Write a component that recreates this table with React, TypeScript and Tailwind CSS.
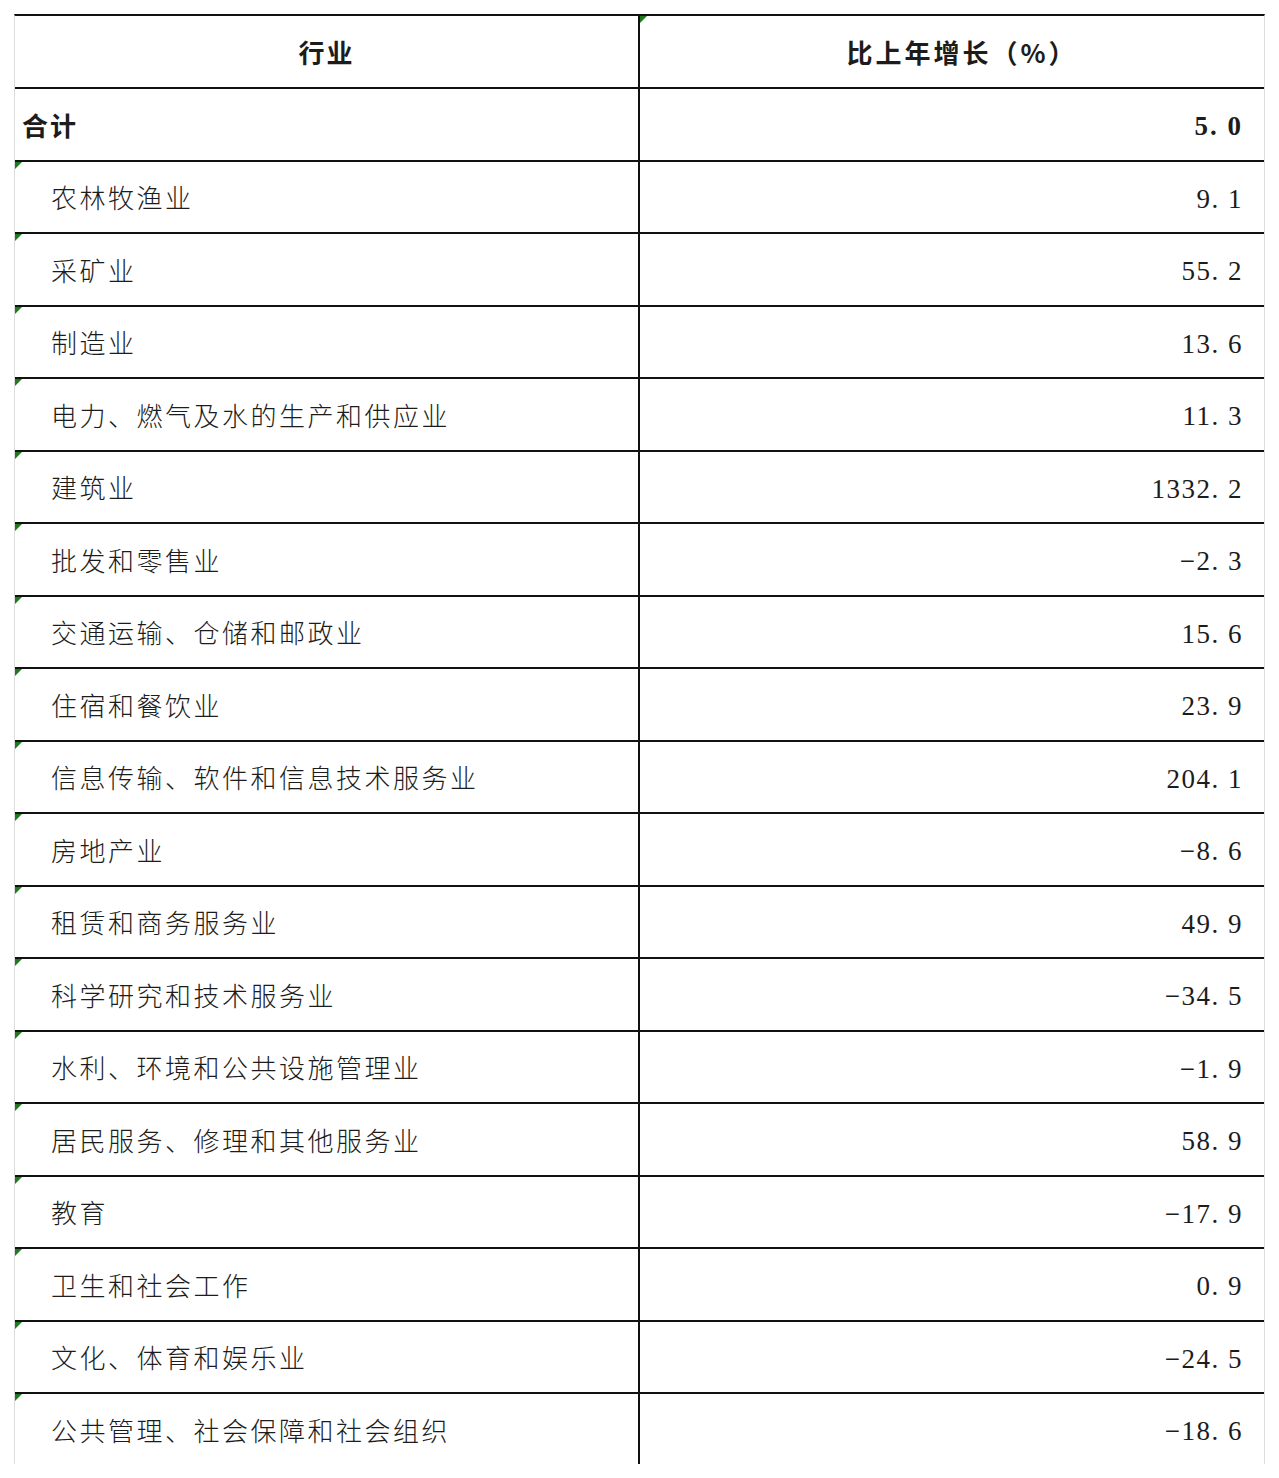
import React from 'react';

const rows: [string, string][] = [
  ['农林牧渔业', '9.1'],
  ['采矿业', '55.2'],
  ['制造业', '13.6'],
  ['电力、燃气及水的生产和供应业', '11.3'],
  ['建筑业', '1332.2'],
  ['批发和零售业', '−2.3'],
  ['交通运输、仓储和邮政业', '15.6'],
  ['住宿和餐饮业', '23.9'],
  ['信息传输、软件和信息技术服务业', '204.1'],
  ['房地产业', '−8.6'],
  ['租赁和商务服务业', '49.9'],
  ['科学研究和技术服务业', '−34.5'],
  ['水利、环境和公共设施管理业', '−1.9'],
  ['居民服务、修理和其他服务业', '58.9'],
  ['教育', '−17.9'],
  ['卫生和社会工作', '0.9'],
  ['文化、体育和娱乐业', '−24.5'],
  ['公共管理、社会保障和社会组织', '−18.6'],
];

const cjk = "font-['Noto_Sans_CJK_SC',sans-serif]";
const num = "font-['Liberation_Serif','Noto_Sans_CJK_SC',serif]";

// small green marker in the top-left corner of a cell
const Flag = () => (
  <span className="absolute left-0 top-0 h-0 w-0 border-t-[7px] border-r-[7px] border-t-[#1f7a1f] border-r-transparent" />
);

const App = () => {
  return (
    <div className="min-h-[1478px] bg-white pt-[14px] text-[#1c1c1c]">
      <div className="ml-[14px] w-[1251px] border-x border-t-2 border-x-[#dcdcdc] border-t-[#111]">
        {/* Header */}
        <div className="flex h-[73px] border-b-2 border-[#111]">
          <div className={`flex w-[623px] items-center justify-center ${cjk} text-[26px] font-bold tracking-[2px]`}>
            行业
          </div>
          <div className={`relative flex flex-1 items-center justify-center border-l-2 border-[#111] pl-[20px] ${cjk} text-[26px] font-bold tracking-[3px]`}>
            <Flag />
            比上年增长（%）
          </div>
        </div>

        {/* Total */}
        <div className="flex h-[72.5px] border-b-2 border-[#111]">
          <div className={`flex w-[623px] items-center pl-[7px] ${cjk} text-[26px] font-bold tracking-[2px]`}>
            合计
          </div>
          <div className={`flex flex-1 items-center justify-end border-l-2 border-[#111] pr-[21px] pt-[4px] ${num} text-[27px] font-bold tracking-[2px]`}>
            5. 0
          </div>
        </div>

        {rows.map(([name, value], i) => {
          const last = i === rows.length - 1;
          return (
            <div
              key={name}
              className={`flex ${last ? 'h-[70px]' : 'h-[72.5px] border-b-2 border-[#111]'}`}
            >
              <div className={`relative flex w-[623px] items-center pl-[36px] ${cjk} text-[26px] font-light tracking-[2.5px]`}>
                <Flag />
                {name}
              </div>
              <div className={`flex flex-1 items-center justify-end border-l-2 border-[#111] pr-[21px] pt-[4px] ${num} text-[27px] tracking-[1.5px]`}>
                {value.replace('.', '. ')}
              </div>
            </div>
          );
        })}
      </div>
    </div>
  );
};

export default App;
